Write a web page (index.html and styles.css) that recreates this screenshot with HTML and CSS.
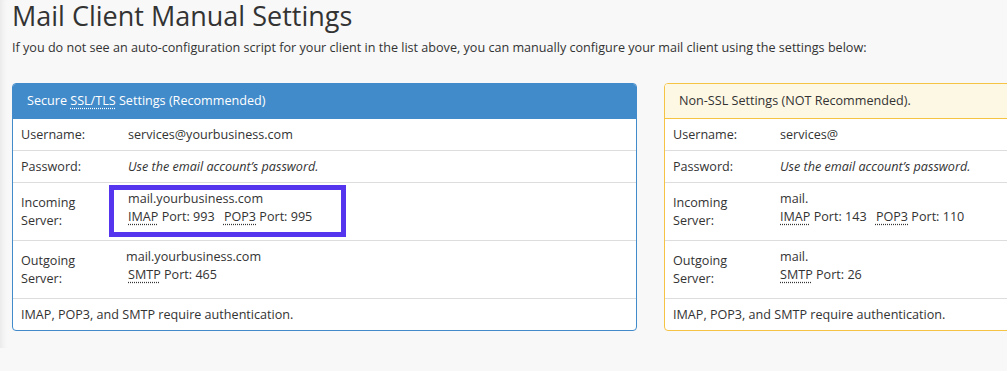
FILE: index.html
```html
<!DOCTYPE html>
<html lang="en">
<head>
    <meta charset="UTF-8">
    <meta name="viewport" content="width=device-width, initial-scale=1.0">
    <title>Mail Client Manual Settings</title>
    <link rel="stylesheet" href="styles.css">
</head>
<body>
    <div class="page">
        <h1>Mail Client Manual Settings</h1>
        <p class="intro">If you do not see an auto-configuration script for your client in the list above, you can manually configure your mail client using the settings below:</p>

        <div class="panels">
            <div class="panel panel-secure">
                <div class="panel-heading">Secure <abbr title="Secure Sockets Layer/Transport Layer Security">SSL/TLS</abbr> Settings (Recommended)</div>
                <table class="settings">
                    <tr>
                        <td class="label">Username:</td>
                        <td class="value">services@yourbusiness.com</td>
                    </tr>
                    <tr>
                        <td class="label">Password:</td>
                        <td class="value"><em>Use the email account’s password.</em></td>
                    </tr>
                    <tr class="multi">
                        <td class="label">Incoming Server:</td>
                        <td class="value">
                            mail.yourbusiness.com<br>
                            <abbr title="Internet Message Access Protocol">IMAP</abbr> Port: 993
                            <span class="port"><abbr title="Post Office Protocol 3">POP3</abbr> Port: 995</span>
                        </td>
                    </tr>
                    <tr class="multi">
                        <td class="label">Outgoing Server:</td>
                        <td class="value tight">
                            mail.yourbusiness.com<br>
                            <span class="lead"><abbr title="Simple Mail Transfer Protocol">SMTP</abbr> Port: 465</span>
                        </td>
                    </tr>
                    <tr>
                        <td colspan="2" class="note">IMAP, POP3, and SMTP require authentication.</td>
                    </tr>
                </table>
                <div class="highlight"></div>
            </div>

            <div class="panel panel-warning">
                <div class="panel-heading">Non-SSL Settings (NOT Recommended).</div>
                <table class="settings">
                    <tr>
                        <td class="label">Username:</td>
                        <td class="value">services@</td>
                    </tr>
                    <tr>
                        <td class="label">Password:</td>
                        <td class="value"><em>Use the email account’s password.</em></td>
                    </tr>
                    <tr class="multi">
                        <td class="label">Incoming Server:</td>
                        <td class="value">
                            mail.<br>
                            <abbr title="Internet Message Access Protocol">IMAP</abbr> Port: 143
                            <span class="port"><abbr title="Post Office Protocol 3">POP3</abbr> Port: 110</span>
                        </td>
                    </tr>
                    <tr class="multi">
                        <td class="label">Outgoing Server:</td>
                        <td class="value">
                            mail.<br>
                            <abbr title="Simple Mail Transfer Protocol">SMTP</abbr> Port: 26
                        </td>
                    </tr>
                    <tr>
                        <td colspan="2" class="note">IMAP, POP3, and SMTP require authentication.</td>
                    </tr>
                </table>
            </div>
        </div>
    </div>
</body>
</html>
```

FILE: styles.css
```css
html, body {
    margin: 0;
    padding: 0;
    background-color: #f8f8f8;
    overflow: hidden;
}
body {
    font-family: "Open Sans", "Liberation Sans", sans-serif;
    font-size: 12.6px;
    color: #333;
}
.page {
    height: 348px;
    padding: 0 0 0 12px;
    box-shadow: inset 7px 0 6px -5px rgba(0,0,0,0.07);
}
h1 {
    margin: 0;
    font-size: 27px;
    line-height: 32px;
    font-weight: 400;
    color: #333;
}
.intro {
    margin: 7px 0 0;
    line-height: 18px;
}
.panels {
    display: grid;
    grid-template-columns: 625px 625px;
    column-gap: 27px;
    margin-top: 26px;
}
.panel {
    position: relative;
    background: white;
    border: 1px solid #428bca;
    border-radius: 4px;
    overflow: hidden;
}
.panel-heading {
    padding: 8px 14px 9px;
    line-height: 18px;
    background-color: #428bca;
    color: white;
}
.panel-warning {
    border-color: #f6c445;
}
.panel-warning .panel-heading {
    background-color: #fdf8e4;
    color: #333;
    border-bottom: 1px solid #f6c445;
    padding-bottom: 8px;
}
.settings {
    width: 100%;
    border-collapse: collapse;
}
.settings td {
    padding: 7px 8px 6px;
    line-height: 18px;
    border-top: 1px solid #ddd;
}
.settings tr:first-child td {
    border-top: none;
}
.settings .label {
    width: 91px;
    vertical-align: middle;
}
.settings .value {
    vertical-align: top;
}
.settings .multi .value {
    padding-bottom: 14px;
}
.settings .tight {
    padding-left: 6px;
}
.lead {
    margin-left: 2px;
}
.port {
    margin-left: 6px;
}
abbr {
    text-decoration: underline dotted;
    text-underline-offset: 3px;
}
.highlight {
    position: absolute;
    left: 96px;
    top: 101px;
    width: 227px;
    height: 42px;
    border: 5px solid #5535ed;
}
```
